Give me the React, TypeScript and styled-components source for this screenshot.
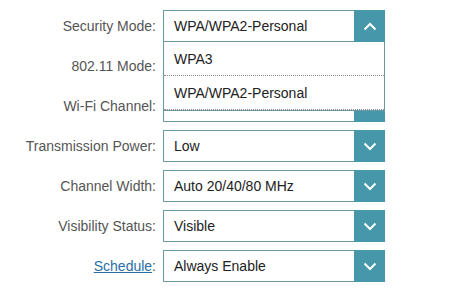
import { Fragment } from 'react';
import styled, { createGlobalStyle } from 'styled-components';

const GlobalStyle = createGlobalStyle`
  body {
    margin: 0;
    background: #fff;
    font-family: "Liberation Sans", Arial, sans-serif;
  }
`;

const Form = styled.div`
  display: grid;
  grid-template-columns: 156px 222px;
  column-gap: 7px;
  row-gap: 8px;
  padding-top: 10px;
`;

const Label = styled.div`
  display: flex;
  align-items: center;
  justify-content: flex-end;
  height: 32px;
  font-size: 14px;
  color: #555;
`;

const LabelLink = styled.a`
  color: #2a6ea6;
  text-decoration: underline;
`;

const SelectWrap = styled.div`
  position: relative;
  display: flex;
  height: 32px;
`;

const Field = styled.div`
  flex: 1;
  display: flex;
  align-items: center;
  padding-left: 10px;
  border: 1px solid #6b9aa4;
  border-right: none;
  font-size: 14px;
  color: #222;
`;

const Toggle = styled.div`
  width: 31px;
  height: 32px;
  background: #4797aa;
  display: flex;
  align-items: center;
  justify-content: center;
`;

const List = styled.div`
  position: absolute;
  top: 100%;
  left: 0;
  width: 222px;
  box-sizing: border-box;
  background: #fff;
  border: 1px solid #6b9aa4;
  border-top: none;
  z-index: 2;
`;

const Option = styled.div`
  height: 33px;
  display: flex;
  align-items: center;
  padding-left: 10px;
  border-bottom: 1px dotted #8a8a8a;
  font-size: 14px;
  color: #222;
`;

const Chevron = ({ up }: { up?: boolean }) => (
  <svg width="14" height="9" viewBox="0 0 14 9">
    <polyline
      points={up ? '1.5,7.5 7,2 12.5,7.5' : '1.5,1.5 7,7 12.5,1.5'}
      fill="none"
      stroke="#fff"
      strokeWidth="2"
    />
  </svg>
);

// rows under the open list show no value in the shot
const rows = [
  { label: 'Security Mode', value: 'WPA/WPA2-Personal', open: true },
  { label: '802.11 Mode', value: '' },
  { label: 'Wi-Fi Channel', value: '' },
  { label: 'Transmission Power', value: 'Low' },
  { label: 'Channel Width', value: 'Auto 20/40/80 MHz' },
  { label: 'Visibility Status', value: 'Visible' },
  { label: 'Schedule', value: 'Always Enable', link: true },
];

const App = () => (
  <>
    <GlobalStyle />
    <Form>
      {rows.map((r) => (
        <Fragment key={r.label}>
          <Label>
            {r.link ? (
              <>
                <LabelLink href="#">{r.label}</LabelLink>:
              </>
            ) : (
              r.label + ':'
            )}
          </Label>
          <SelectWrap>
            <Field>{r.value}</Field>
            <Toggle>
              <Chevron up={r.open} />
            </Toggle>
            {r.open && (
              <List>
                <Option>WPA3</Option>
                <Option>WPA/WPA2-Personal</Option>
              </List>
            )}
          </SelectWrap>
        </Fragment>
      ))}
    </Form>
  </>
);

export default App;
